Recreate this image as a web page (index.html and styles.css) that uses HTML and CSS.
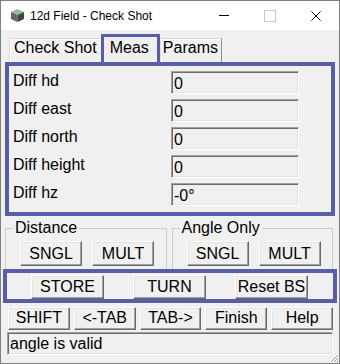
FILE: index.html
```html
<!DOCTYPE html>
<html>
<head>
    <meta charset="UTF-8">
    <title>12d Field - Check Shot</title>
    <link rel="stylesheet" href="styles.css">
</head>
<body>
<div class="win">
    <div class="title">
        <svg class="logo" viewBox="0 0 13 13">
            <polygon points="6.5,0 13,3 6.5,6 0,3" fill="#9bb59e"/>
            <polygon points="0,3 6.5,6 6.5,13 0,10" fill="#4f6f58"/>
            <polygon points="6.5,6 13,3 13,10 6.5,13" fill="#2f4d39"/>
            <text x="0.8" y="10" font-size="5" font-family="Liberation Sans, sans-serif" fill="#e0303a">12</text>
        </svg>
        <span class="caption">12d Field - Check Shot</span>
        <div class="ctl">
            <span class="min"></span>
            <span class="max"></span>
            <span class="close">
                <svg width="10" height="10" viewBox="0 0 10 10"><path d="M0.5 0.5L9.5 9.5M9.5 0.5L0.5 9.5" stroke="#000" stroke-width="1"/></svg>
            </span>
        </div>
    </div>

    <ul class="tabs">
        <li class="first">Check Shot</li>
        <li class="select">Meas</li>
        <li>Params</li>
    </ul>

    <div class="page">
        <div class="row"><label>Diff hd</label><div class="field">0</div></div>
        <div class="row"><label>Diff east</label><div class="field">0</div></div>
        <div class="row"><label>Diff north</label><div class="field">0</div></div>
        <div class="row"><label>Diff height</label><div class="field">0</div></div>
        <div class="row"><label>Diff hz</label><div class="field">-0°</div></div>
    </div>

    <div class="groups">
        <fieldset>
            <legend>Distance</legend>
            <button>SNGL</button>
            <button>MULT</button>
        </fieldset>
        <fieldset>
            <legend>Angle Only</legend>
            <button>SNGL</button>
            <button>MULT</button>
        </fieldset>
    </div>

    <div class="bar">
        <button>STORE</button>
        <button>TURN</button>
        <button>Reset BS</button>
    </div>

    <div class="nav">
        <button>SHIFT</button>
        <button>&lt;-TAB</button>
        <button>TAB-&gt;</button>
        <button>Finish</button>
        <button>Help</button>
    </div>

    <div class="status">angle is valid</div>

    <!--右下角拖拽手柄-->
    <svg class="grip" width="10" height="10" viewBox="0 0 10 10">
        <path d="M9 2L2 9M9 5L5 9M9 8L8 9" stroke="#a8a8a8" stroke-width="1"/>
    </svg>
</div>
</body>
</html>
```

FILE: styles.css
```css
* {
    margin: 0;
    padding: 0;
    box-sizing: border-box;
}

ul, li {
    list-style: none;
}

body {
    font-family: "Liberation Sans", Arial, sans-serif;
    font-size: 16px;
    color: #000;
    background: #f0f0f0;
}

.win {
    position: relative;
    display: flex;
    flex-direction: column;
    width: 340px;
    height: 364px;
    border: 1px solid #7f7f7f;
    background: #f0f0f0;
}

/* 标题栏 */
.title {
    display: flex;
    align-items: center;
    height: 29px;
    padding-left: 10px;
    background: #fff;
    font-size: 12px;
}

.logo {
    width: 13px;
    height: 13px;
    margin-right: 6px;
}

.caption {
    flex: 1;
}

.ctl {
    display: flex;
    height: 100%;
}

.ctl span {
    display: flex;
    align-items: center;
    justify-content: center;
    width: 46px;
}

.min:after {
    content: "";
    width: 10px;
    height: 1px;
    background: #000;
}

.max:after {
    content: "";
    width: 10px;
    height: 10px;
    border: 1px solid #c8c8c8;
}

/* 选项卡 */
.tabs {
    display: flex;
    align-items: flex-end;
    height: 32px;
    padding-left: 8px;
}

.tabs li {
    height: 24px;
    padding: 0 3px 0 2px;
    line-height: 18px;
    border-top: 1px solid #dadada;
    border-left: 1px solid #dadada;
    border-right: 1px solid #8a8a8a;
    box-shadow: inset 1px 1px #fff;
}

.tabs li.first {
    padding: 0 4px 0 4px;
    border-right: 0;
}

.tabs li.select {
    height: 28px;
    padding: 2px 8px 0 6px;
    border: 3px solid #5a5ea6;
    border-bottom: 0;
    box-shadow: none;
}

/* 页面 */
.page {
    display: flex;
    flex-direction: column;
    gap: 5px;
    height: 154px;
    margin: 0 4px;
    padding: 5px 0 0 4px;
    border: 4px solid #5a5ea6;
}

.row {
    display: flex;
    align-items: flex-start;
    height: 23px;
}

.row label {
    width: 158px;
    padding-top: 1px;
    line-height: 18px;
}

.field, .status {
    height: 23px;
    padding-left: 2px;
    line-height: 23px;
    border: 1px solid;
    border-color: #a0a0a0 #fff #fff #a0a0a0;
    box-shadow: inset 1px 1px #6d6d6d, inset -1px -1px #e3e3e3;
}

.field {
    width: 128px;
}

/* 分组框 */
.groups {
    display: flex;
    gap: 5px;
    height: 53px;
    padding: 0 6px 0 4px;
}

fieldset {
    display: flex;
    flex: 1;
    gap: 10px;
    align-items: flex-start;
    margin-top: 3px;
    padding: 4px 0 0 14px;
    border: 1px solid #cbcbcb;
    border-bottom: 0;
}

legend {
    margin-left: -7px;
    padding: 0 2px;
    line-height: 18px;
}

button {
    font-family: "Liberation Sans", Arial, sans-serif;
    font-size: 16px;
    color: #000;
    background: #f0f0f0;
    border: 1px solid;
    border-color: #fff #696969 #696969 #fff;
    box-shadow: inset -1px -1px #a0a0a0, inset 1px 1px #e3e3e3;
}

fieldset button {
    width: 62px;
    height: 25px;
}

.bar {
    display: flex;
    gap: 29px;
    height: 34px;
    margin: 0 2px;
    padding: 2px 0 0 24px;
    border: 4px solid #5a5ea6;
}

.bar button {
    width: 73px;
    height: 24px;
}

.nav {
    display: grid;
    grid-template-columns: repeat(5, 1fr);
    gap: 4px;
    height: 23px;
    margin-top: 4px;
    padding: 0 6px 0 7px;
}

.nav button {
    padding-bottom: 2px;
}

.status {
    margin: 2px 6px 0;
    padding-left: 2px;
    line-height: 22px;
}

.grip {
    position: absolute;
    right: 0;
    bottom: 0;
}
```
